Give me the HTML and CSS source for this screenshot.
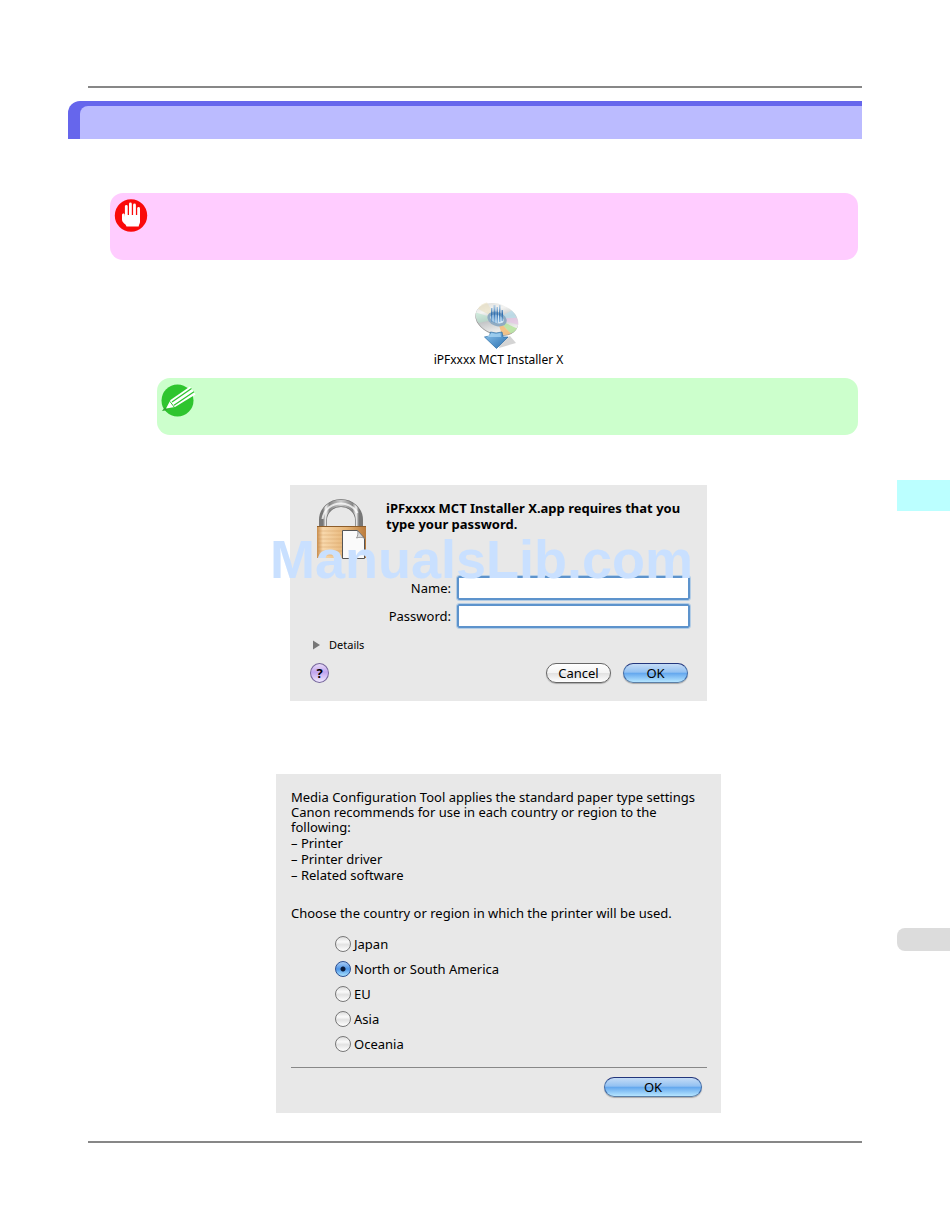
FILE: index.html
```html
<!DOCTYPE html>
<html lang="en">
<head>
  <meta charset="UTF-8" />
  <meta name="viewport" content="width=device-width, initial-scale=1.0"/>
  <title>Media Configuration Tool</title>
  <link rel="stylesheet" href="styles.css">
</head>
<body>
  <main class="page">
    <hr class="page-rule">
    <div class="banner"><div class="banner-inner"></div></div>

    <div class="note important">
      <svg class="note-icon" width="34" height="34" viewBox="0 0 34 34" aria-hidden="true">
        <circle cx="17" cy="17.5" r="16.2" fill="#fa0a0a"/>
        <g stroke="#fff" stroke-width="2.8" stroke-linecap="round">
          <path d="M12.3 8.5V20"/>
          <path d="M16.4 6V20"/>
          <path d="M20.500 7V20"/>
          <path d="M24.600 10.500V20"/>
        </g>
        <path d="M8 17c0-2 2.800-2 2.800 0l.2 2V17h15v7c0 1.500-1 2-1.300 4.500H12.500c-.3-2.500-4.500-3.500-4.500-7z" fill="#fff"/>
      </svg>
    </div>

    <div class="content">
      <figure class="installer">
        <svg width="48" height="48" viewBox="2 -1 48 48" aria-hidden="true">
          <defs>
            <linearGradient id="disc" x1="0" y1="0" x2="1" y2="1">
              <stop offset="0" stop-color="#d0d0cd"/>
              <stop offset=".3" stop-color="#f4f4f2"/>
              <stop offset=".5" stop-color="#c4c6c8"/>
              <stop offset=".75" stop-color="#eeeeec"/>
              <stop offset="1" stop-color="#bfc0c0"/>
            </linearGradient>
            <linearGradient id="arrow" x1="0" y1="0" x2="1" y2="1">
              <stop offset="0" stop-color="#8cc4ee"/>
              <stop offset="1" stop-color="#2a6fae"/>
            </linearGradient>
            <linearGradient id="beam" x1="0" y1="0" x2="0" y2="1">
              <stop offset="0" stop-color="#5b9bd2" stop-opacity=".3"/>
              <stop offset=".5" stop-color="#2c6db0"/>
              <stop offset="1" stop-color="#5b9bd2" stop-opacity=".5"/>
            </linearGradient>
          </defs>
          <path d="M26 45l17-5-6-7-10 4z" fill="#aaa" opacity=".5"/>
          <g transform="rotate(20 24 16)">
            <ellipse cx="24" cy="17" rx="22" ry="15" fill="#999"/>
            <ellipse cx="24" cy="16" rx="22" ry="15" fill="url(#disc)"/>
            <path d="M24 16L2.500 13Q4 7 9 4z" fill="#e9dfc0" opacity=".6"/>
            <path d="M24 16L8 26Q3 22 2 17z" fill="#a9dfc6" opacity=".5"/>
            <path d="M24 16L35 3Q39 5 42 8z" fill="#b8dff0" opacity=".7"/>
            <path d="M24 16L42 8Q45 11 46 14z" fill="#e7c5e6" opacity=".7"/>
            <path d="M24 16L46 18Q45 22 42 25z" fill="#b3e398" opacity=".8"/>
            <path d="M24 16L42 25Q39 28 34 29z" fill="#f5b970" opacity=".8"/>
            <ellipse cx="24" cy="16" rx="10" ry="7" fill="#8fabc2"/>
            <ellipse cx="24" cy="16" rx="7" ry="4" fill="#d4e8f6"/>
          </g>
          <path d="M18 5h1.500v14H18zM20.500 2h2v18h-2zM23.500 4h1.500v16h-1.500zM26 2h1.500v17H26zM28.500 7h1.500v11h-1.500z" fill="url(#beam)"/>
          <path d="M17.500 29Q23 31 29 29l1 5h5L23.500 45.500 11.500 34l5-1z" fill="url(#arrow)" stroke="#286ba4" stroke-width=".7"/>
          <path d="M18.500 30q4 1.500 9 0l.5 4H14z" fill="#add8f5" opacity=".7"/>
        </svg>
        <figcaption>iPFxxxx MCT Installer X</figcaption>
      </figure>

      <div class="note hint">
        <svg class="note-icon" width="36" height="34" viewBox="0 0 36 34" aria-hidden="true">
          <circle cx="16.500" cy="17.500" r="16" fill="#2fc52f"/>
          <path d="M1 28l3-4 3 3z" fill="#2fa82f"/>
          <path d="M5 25.500L9.500 17 29 3.500l5.500 8L14 24z" fill="#fff"/>
          <path d="M9 18.500l4.500 6" stroke="#2fc52f"/>
          <path d="M11 19L30.500 5.500M13 22.300L33 8.800" stroke="#2fc52f" stroke-width="1.300"/>
        </svg>
      </div>

      <form class="dialog login">
        <div class="login-head">
          <svg class="lock" width="54" height="64" viewBox="0 0 54 64" aria-hidden="true">
            <defs>
              <linearGradient id="steel">
                <stop offset="0" stop-color="#777"/>
                <stop offset=".08" stop-color="#f5f5f5"/>
                <stop offset=".18" stop-color="#888"/>
                <stop offset=".5" stop-color="#ccc"/>
                <stop offset=".82" stop-color="#888"/>
                <stop offset=".92" stop-color="#f5f5f5"/>
                <stop offset="1" stop-color="#777"/>
              </linearGradient>
              <linearGradient id="brass">
                <stop offset="0" stop-color="#c98d4c"/>
                <stop offset=".12" stop-color="#f8d8ac"/>
                <stop offset=".6" stop-color="#e6b577"/>
                <stop offset="1" stop-color="#b97a3b"/>
              </linearGradient>
            </defs>
            <path d="M7 30V23a18 17 0 0 1 36 0v7" fill="none" stroke="#777" stroke-width="8"/>
            <path d="M7 30V23a18 17 0 0 1 36 0v7" fill="none" stroke="url(#steel)" stroke-width="6.500"/>
            <path d="M6.500 22a18.500 17 0 0 1 35-6" fill="none" stroke="#fff" stroke-width="2" opacity=".75"/>
            <rect x="1" y="29" width="49" height="32" fill="url(#brass)"/>
            <path d="M1 29.500h49" stroke="#8d5d2a"/>
            <path d="M2 34h47M2 38h47M2 42h47M2 46h47M2 50h47M2 54h47M2 58h47" stroke="#c98e50" stroke-width=".6" opacity=".5"/>
            <path d="M26.500 33.500h15l7 8v20h-22z" fill="#fafafa" stroke="#555"/>
            <path d="M41.500 33.500c1 3 0 6-1 7.500 3-1 6-1 8 .5z" fill="#ddd" stroke="#777" stroke-width=".7"/>
          </svg>
          <p class="login-title">iPFxxxx MCT Installer X.app requires that you type your password.</p>
        </div>
        <div class="fields">
          <label for="name">Name:</label>
          <input class="field" type="text" id="name" name="name">
          <label for="password">Password:</label>
          <input class="field" type="password" id="password" name="password">
        </div>
        <details class="more">
          <summary>
            <svg width="8" height="10" viewBox="0 0 8 10" aria-hidden="true"><path d="M0 .5l7 4.500-7 4.500z" fill="#777"/></svg>
            Details
          </summary>
        </details>
        <div class="login-actions">
          <button class="help" type="button">?</button>
          <button class="btn" type="button">Cancel</button>
          <button class="btn btn-default" type="button">OK</button>
        </div>
        <div class="watermark">ManualsLib.com</div>
      </form>

      <form class="dialog region">
        <p class="intro">Media Configuration Tool applies the standard paper type settings Canon recommends for use in each country or region to the following:</p>
        <ul class="targets">
          <li>– Printer</li>
          <li>– Printer driver</li>
          <li>– Related software</li>
        </ul>
        <fieldset class="choices">
          <legend>Choose the country or region in which the printer will be used.</legend>
          <label><input type="radio" name="region"> Japan</label>
          <label><input type="radio" name="region" checked> North or South America</label>
          <label><input type="radio" name="region"> EU</label>
          <label><input type="radio" name="region"> Asia</label>
          <label><input type="radio" name="region"> Oceania</label>
        </fieldset>
        <div class="region-actions">
          <button class="btn btn-default btn-wide" type="button">OK</button>
        </div>
      </form>
    </div>
    <hr class="page-rule">
  </main>
  <aside class="tabs">
    <div class="tab-chapter"></div>
    <div class="tab-page"></div>
  </aside>
</body>
</html>
```

FILE: styles.css
```css
* { box-sizing: border-box; }
body { margin: 0; display: grid; grid-template-columns: 1fr 53px; background: #fff; color: #000; font-family: "Noto Sans", "Open Sans", sans-serif; font-size: 13px; line-height: 16px; }
p, ul, figure { margin: 0; padding: 0; }
button, input { font: inherit; color: inherit; }

.page { padding: 86px 35px 86px 68px; }
.page-rule { height: 2px; margin: 0 0 0 20px; border: 0; background: #878787; }
.banner { margin-top: 13px; padding: 5px 0 0 12px; background: #6666ec; border-top-left-radius: 12px; }
.banner-inner { height: 33px; background: #bbbbff; border-top-left-radius: 8px; }

.note { border-radius: 13px; }
.note-icon { display: block; }
.important { margin: 54px 4px 0 42px; padding: 5px 4px 28px; background: #ffccff; }
.hint { margin: 10px 0 0 18px; padding: 5px 4px 18px; background: #ccffcc; }

.content { margin: 0 4px 28px 71px; }
.installer { padding-top: 42px; text-align: center; font-size: 12px; }
.installer svg { display: block; margin: 0 auto; }
.installer figcaption { margin-top: 2px; }

.dialog { position: relative; margin: 0 auto; background: #e8e8e8; }

/* password dialog */
.login { max-width: 417px; margin-top: 50px; padding: 12px 17px 18px 20px; }
.login-head { display: flex; gap: 16px; padding-left: 6px; }
.lock { flex: none; }
.login-title { padding-top: 3px; font-weight: bold; }
.fields { display: grid; grid-template-columns: 1fr 233px; gap: 4px 6px; align-items: center; margin-top: 15px; text-align: right; }
.field { width: 100%; height: 24px; padding: 0 4px; border: 2px solid #5d93cc; border-radius: 2px; background: #fff; outline: 1px solid #b3cde6; outline-offset: 0; }
.more { margin-top: 9px; font-size: 11px; }
.more summary { display: flex; align-items: center; gap: 8px; padding-left: 3px; list-style: none; }
.login-actions { display: flex; gap: 12px; align-items: center; margin-top: 10px; padding-right: 2px; }
.help { width: 19px; height: 20px; margin-right: auto; padding: 0; border: 1px solid #75659b; border-radius: 50%; background: linear-gradient(#e9dcf8, #c0a4ee 45%, #f1e9ff); font-weight: bold; line-height: 16px; }
.btn { width: 65px; height: 20px; padding: 0; border: 1px solid #666; border-radius: 10px; background: linear-gradient(#fff, #f4f4f4 48%, #e2e2e2 52%, #fff); box-shadow: 0 1px 1px #aaa; line-height: 16px; }
.btn-default { border-color: #23367c #3f6aa6 #5c7fa6; background: linear-gradient(#c5dcf6, #93c1f2 45%, #65a8ee 52%, #b5e5ff); }
.watermark { position: absolute; top: 54px; left: -20px; color: #c9e0ff; font: bold 54px/40px "Liberation Sans", Arial, sans-serif; white-space: nowrap; pointer-events: none; }

/* region dialog */
.region { max-width: 445px; margin-top: 73px; padding: 16px 14px 16px 15px; }
.intro { line-height: 15px; }
.targets { list-style: none; }
.choices { margin: 0; padding: 0 0 11px; border: 0; border-bottom: 1px solid #888; }
.choices legend { padding: 22px 0 10px; }
.choices label { display: flex; align-items: center; gap: 3px; height: 25px; padding-left: 44px; }
.choices input { appearance: none; width: 16px; height: 16px; margin: 0; border: 1px solid #777; border-radius: 50%; background: linear-gradient(#ddd, #fafafa 35%, #e2e2e2 55%, #fff); }
.choices input:checked { border-color: #2c4f91; background: radial-gradient(circle, #0a1b3c 2px, transparent 3px), linear-gradient(#a9ccf5, #4d94e6 50%, #a8e2ff); }
.region-actions { display: flex; justify-content: flex-end; padding: 9px 5px 0 0; }
.btn-wide { width: 98px; }

/* page edge tabs */
.tabs { padding-top: 480px; }
.tab-chapter { height: 31px; background: #bbffff; }
.tab-page { height: 23px; margin-top: 417px; background: #dcdcdc; border-radius: 8px 0 0 8px; }
```
